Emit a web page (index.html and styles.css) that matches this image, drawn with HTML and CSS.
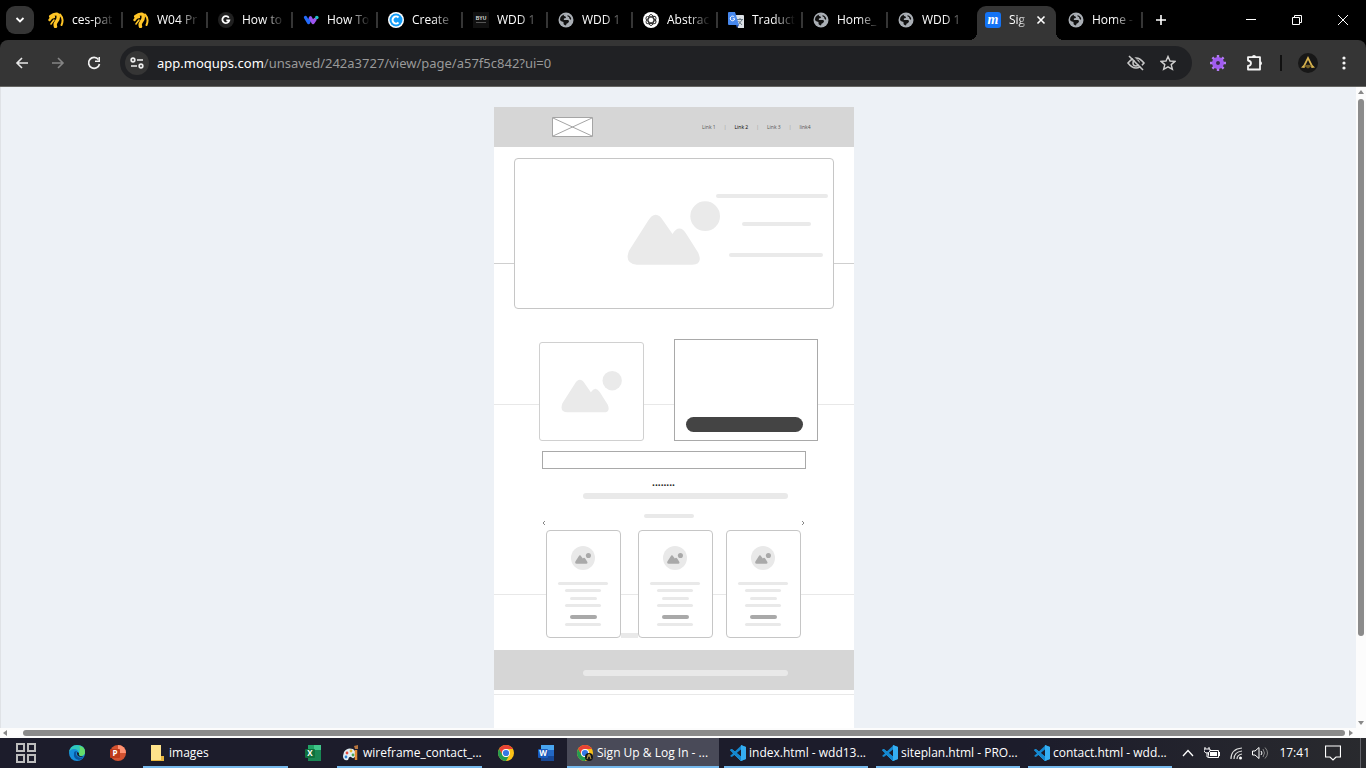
FILE: index.html
```html
<!DOCTYPE html>
<html lang="en">
<head>
<meta charset="utf-8">
<meta name="viewport" content="width=device-width, initial-scale=1">
<title>Sign Up &amp; Log In</title>
<link rel="stylesheet" href="styles.css">
</head>
<body>
<svg class="defs" aria-hidden="true">
  <symbol id="church" viewBox="0 0 16 16"><g fill="none" stroke="#ffc526" stroke-linecap="round"><path d="M2.500 4.500Q6 1.500 9 2" stroke-width="3"/><path d="M1.500 8Q3.500 5 6 5" stroke-width="2.400"/><path d="M10 3Q11 7 8.500 9.500Q6.500 12 7.500 14.500" stroke-width="3.400"/><path d="M12 2.500Q15 6 14.500 9Q14.500 11 13.500 13" stroke-width="2"/><path d="M3 12Q4 10.500 6 8" stroke-width="1.600"/></g></symbol>
  <symbol id="globe" viewBox="0 0 16 16"><circle cx="8" cy="8" r="7.500" fill="#a9aeb4"/><path d="M8 2Q5 2 6 4Q8 4 8 6Q5 6 6 8H10Q12 9 10 11Q8 11 8 13.500Q5 13 5.500 10Q2 9 2 7.500Q2 3 8 2Z" fill="#111"/><path d="M9.500 3Q14 5 13 8Q11 7 11 5Q9 5 9.500 3Z" fill="#111"/></symbol>
  <symbol id="chrome" viewBox="0 0 16 16"><circle cx="8" cy="8" r="8" fill="#fbc116"/><path d="M1.100 4A8 8 0 0 1 14.900 4H8L4.600 10Z" fill="#e94235"/><path d="M1.100 4A8 8 0 0 0 8 16L11.500 10A4 4 0 0 1 4.500 10Z" fill="#229b51"/><circle cx="8" cy="8" r="4" fill="#fff"/><circle cx="8" cy="8" r="3.100" fill="#3478e5"/></symbol>
  <symbol id="code" viewBox="0 0 16 16"><path d="M11 0L16 2V14L11 16L4.500 10L1.800 12L0 11L10.700 1Z" fill="#1387d0"/><path d="M1.800 4L0 5L11 16L16 14V2L11 0V11.500Z" fill="#35aef2"/><path d="M11 4.500V11.500L6.700 8Z" fill="#1c1c2b"/><path d="M1.800 4L11 11.500V16L0 5Z" fill="#1387d0"/></symbol>
  <symbol id="hills" viewBox="0 0 94 65"><path d="M2 50L21 20Q29 7 37 20L46 33Q53 22 60 33L72 52Q77 64 66 64H10Q-3 63 2 50Z"/><circle cx="79" cy="15" r="15"/></symbol>
</svg>

<header class="browser">
  <div class="tabstrip">
    <button class="tab-search" aria-label="Search tabs"><svg viewBox="0 0 12 12"><path d="M2.500 4L6 7.500L9.500 4" fill="none" stroke="#fff" stroke-width="1.800"/></svg></button>
    <nav class="tabs" aria-label="Tabs">
      <a class="tab" href="#"><svg><use href="#church"/></svg><span>ces-pat</span></a>
      <a class="tab" href="#"><svg><use href="#church"/></svg><span>W04 Pr</span></a>
      <a class="tab" href="#"><svg viewBox="0 0 16 16"><circle cx="8" cy="8" r="8" fill="#202020"/><path d="M10.800 5.700A3.500 3.500 0 1 0 11.300 8.300H8.300" fill="none" stroke="#fff" stroke-width="1.800"/></svg><span>How to</span></a>
      <a class="tab" href="#"><svg viewBox="0 0 16 16"><path d="M2.500 5.500L5.500 10.500L7.500 6" fill="none" stroke="#236bfa" stroke-width="3.300" stroke-linecap="round" stroke-linejoin="round"/><path d="M7.500 6L10 10.500L12 7.500" fill="none" stroke="#9e55ef" stroke-width="3.300" stroke-linecap="round" stroke-linejoin="round"/><circle cx="13.800" cy="5.500" r="1.800" fill="#22bfc6"/></svg><span>How To</span></a>
      <a class="tab" href="#"><svg viewBox="0 0 16 16"><circle cx="8" cy="8" r="8" fill="#fff"/><circle cx="8" cy="8" r="6.500" fill="#149df8"/><path d="M10.500 5.500A3.500 3.500 0 1 0 10.500 10.500" fill="none" stroke="#fff" stroke-width="2"/></svg><span>Create</span></a>
      <a class="tab" href="#"><svg viewBox="0 0 16 16"><path d="M0 0H16V16H0Z" fill="#111"/><text x="8" y="8" class="mark-byu">BYU</text><path d="M3 10.500H13" stroke="#555"/></svg><span>WDD 1</span></a>
      <a class="tab" href="#"><svg><use href="#globe"/></svg><span>WDD 1</span></a>
      <a class="tab" href="#"><svg viewBox="0 0 16 16"><circle cx="8" cy="8" r="8" fill="#fff"/><g fill="none" stroke="#222" stroke-width=".9"><ellipse cx="8" cy="8" rx="2.800" ry="5.500"/><ellipse cx="8" cy="8" rx="2.800" ry="5.500" transform="rotate(60 8 8)"/><ellipse cx="8" cy="8" rx="2.800" ry="5.500" transform="rotate(120 8 8)"/></g></svg><span>Abstrac</span></a>
      <a class="tab" href="#"><svg viewBox="0 0 16 16"><path d="M6 3H15Q16 3 16 4V16H10Z" fill="#dce0e5"/><path d="M9 7.500H15M12 6V8M10 13L14 8M10.500 9L14 13" stroke="#687884" fill="none"/><path d="M1 0H7L11 13H1Q0 13 0 12V1Q0 0 1 0Z" fill="#4788ed"/><path d="M8 13H11L9 16Z" fill="#2455b5"/><path d="M6.300 5A2.300 2.300 0 1 0 6.800 6.800H4.800" fill="none" stroke="#fff"/></svg><span>Traduct</span></a>
      <a class="tab" href="#"><svg><use href="#globe"/></svg><span>Home_</span></a>
      <a class="tab before-active" href="#"><svg><use href="#globe"/></svg><span>WDD 1</span></a>
      <div class="tab active"><svg viewBox="0 0 16 16"><rect width="16" height="16" rx="3" fill="#1473f5"/><text x="8" y="12" class="mark-m">m</text></svg><span>Sig</span><button aria-label="Close tab"><svg viewBox="0 0 10 10"><path d="M1.500 1.500L8.500 8.500M8.500 1.500L1.500 8.500" stroke="#fff" stroke-width="1.600"/></svg></button></div>
      <a class="tab" href="#"><svg><use href="#globe"/></svg><span>Home -</span></a>
    </nav>
    <div class="window-controls">
      <button class="new-tab" aria-label="New tab"><svg viewBox="0 0 12 12"><path d="M6 1V11M1 6H11" stroke="#fff" stroke-width="1.600"/></svg></button>
      <button aria-label="Minimize"><svg viewBox="0 0 12 12"><path d="M1 5.500H11" stroke="#fff"/></svg></button>
      <button aria-label="Restore"><svg viewBox="0 0 12 12"><path d="M1.500 3.500H8.500V10.500H1.500ZM3.500 3V1.500H10.500V8.500H9" fill="none" stroke="#fff"/></svg></button>
      <button aria-label="Close"><svg viewBox="0 0 12 12"><path d="M1 1L11 11M11 1L1 11" stroke="#fff"/></svg></button>
    </div>
  </div>
  <div class="toolbar">
    <button aria-label="Back"><svg viewBox="0 0 16 16"><path d="M14 8H3M8 3L3 8L8 13" fill="none" stroke="#e8e8e8" stroke-width="1.600"/></svg></button>
    <button aria-label="Forward"><svg viewBox="0 0 16 16"><path d="M2 8H13M8 3L13 8L8 13" fill="none" stroke="#858585" stroke-width="1.600"/></svg></button>
    <button aria-label="Reload"><svg viewBox="0 0 16 16"><path d="M12.500 4.500A5.500 5.500 0 1 0 13.500 9" fill="none" stroke="#f0f0f0" stroke-width="1.700"/><path d="M14 2V7H9V5.500H12.500V2Z" fill="#f0f0f0"/></svg></button>
    <div class="omnibox">
      <button class="site-info" aria-label="Site information"><svg viewBox="0 0 16 16"><g fill="none" stroke="#eee" stroke-width="1.700"><circle cx="4" cy="5" r="1.800"/><path d="M8 5H14M2 11H8"/><circle cx="12" cy="11" r="1.800"/></g></svg></button>
      <a class="address" href="#">app.moqups.com<span>/unsaved/242a3727/view/page/a57f5c842?ui=0</span></a>
      <button aria-label="Third-party cookies blocked"><svg class="wide-icon" viewBox="0 0 18 16"><path d="M1 8Q9-2 17 8Q9 18 1 8Z" fill="none" stroke="#c7c7c7" stroke-width="1.600"/><circle cx="9" cy="8" r="3" fill="none" stroke="#c7c7c7" stroke-width="1.500"/><path d="M4 0L17 14" stroke="#202124" stroke-width="2"/><path d="M2 1L16 15" stroke="#c7c7c7" stroke-width="1.600"/></svg></button>
      <button aria-label="Bookmark"><svg viewBox="0 0 16 16"><path d="M8 1.500L10 6L15 6.400L11.200 9.600L12.400 14.300L8 11.800L3.600 14.300L4.800 9.600L1 6.400L6 6Z" fill="none" stroke="#d0d0d0" stroke-width="1.400"/></svg></button>
    </div>
    <div class="extensions">
      <button aria-label="Extension"><svg viewBox="0 0 16 16"><path d="M8 0V16M0 8H16M2.400 2.400L13.600 13.600M13.600 2.400L2.400 13.600" stroke="#b47af6" stroke-width="2.400"/><circle cx="8" cy="8" r="4" fill="none" stroke="#a15cf1" stroke-width="4"/><circle cx="8" cy="8" r="2" fill="#38284d"/></svg></button>
      <button aria-label="Extensions"><svg class="wide-icon" viewBox="0 0 18 16"><path d="M3 2.200H15V14.500H3V11Q6 10.500 6 8.300Q6 6 3 5.500Z" fill="none" stroke="#f5f5f5" stroke-width="1.800" stroke-linejoin="round"/><path d="M7 2A2 2 0 0 1 11 2ZM15 6.300A2 2 0 0 1 15 10.300Z" fill="#f5f5f5"/></svg></button>
      <i class="divider"></i>
      <button class="profile" aria-label="Profile"><svg viewBox="0 0 20 20"><circle cx="10" cy="10" r="10" fill="#171717"/><path d="M10 3L14.500 12L17 14.500L13.500 15L12.500 12L10 7L7.500 12L6.500 15L3 14.500L5.500 12Z" fill="#d7b34f"/><path d="M6 13Q10 10.500 14 13L10 15.500Z" fill="#776127"/></svg></button>
      <button class="menu" aria-label="Menu"><svg viewBox="0 0 16 16"><g fill="#f5f5f5"><circle cx="8" cy="3" r="1.600"/><circle cx="8" cy="8" r="1.600"/><circle cx="8" cy="13" r="1.600"/></g></svg></button>
    </div>
  </div>
</header>

<main class="viewport">
  <div class="workspace">
    <article class="page">
      <div class="guides"><i></i><i></i><i></i><i></i></div>
      <header class="page-head">
        <svg class="logo" viewBox="0 0 41 20"><path d="M.5 .5H40.500V19.500H.5Z" fill="#fff" stroke="#a5a5a5"/><path d="M1 1L40 19M40 1L1 19" stroke="#a5a5a5"/></svg>
        <nav class="page-links"><a href="#">Link 1</a><i>|</i><a class="current" href="#">Link 2</a><i>|</i><a href="#">Link 3</a><i>|</i><a href="#">link4</a></nav>
      </header>
      <section class="hero">
        <svg class="hero-picture"><use href="#hills"/></svg>
        <div class="hero-lines"><i></i><i></i><i></i></div>
      </section>
      <section class="feature">
        <div class="feature-picture"><svg><use href="#hills"/></svg></div>
        <div class="feature-box"><button aria-label="Call to action"></button></div>
      </section>
      <input class="field" type="text" aria-label="Text field">
      <p class="dots">........</p>
      <i class="bar"></i>
      <section class="carousel">
        <i class="caption"></i>
        <div class="arrows"><button aria-label="Previous"><svg viewBox="0 0 4 6"><path d="M3 1L1 3L3 5" fill="none" stroke="#888"/></svg></button><button aria-label="Next"><svg viewBox="0 0 4 6"><path d="M1 1L3 3L1 5" fill="none" stroke="#888"/></svg></button></div>
        <div class="cards">
          <div class="card"><span class="avatar"><svg><use href="#hills"/></svg></span><i class="wide"></i><i></i><i class="short"></i><i></i><i class="short dark"></i><i></i></div>
          <b class="stub"></b>
          <div class="card"><span class="avatar"><svg><use href="#hills"/></svg></span><i class="wide"></i><i></i><i class="short"></i><i></i><i class="short dark"></i><i></i></div>
          <div class="card last"><span class="avatar"><svg><use href="#hills"/></svg></span><i class="wide"></i><i></i><i class="short"></i><i></i><i class="short dark"></i><i></i></div>
        </div>
      </section>
      <footer class="page-foot"><i class="bar"></i></footer>
    </article>
  </div>
  <div class="scroll vertical"><svg viewBox="0 0 8 8"><path d="M4 2L7 6H1Z"/></svg><i></i><svg viewBox="0 0 8 8"><path d="M4 6L7 2H1Z"/></svg></div>
  <div class="scroll horizontal"><svg viewBox="0 0 8 8"><path d="M2 4L6 1V7Z"/></svg><i></i><svg viewBox="0 0 8 8"><path d="M6 4L2 1V7Z"/></svg></div>
</main>

<footer class="taskbar">
  <button class="start" aria-label="Start"><svg viewBox="0 0 20 20"><path d="M1 1H8V8H1ZM12 1H19V8H12ZM1 12H8V19H1ZM12 12H19V19H12Z" fill="none" stroke="#bdbdbd" stroke-width="2"/></svg></button>
  <button class="pin" aria-label="Edge"><svg viewBox="0 0 16 16"><circle cx="8" cy="8" r="8" fill="#168fdc"/><path d="M0 8Q1 0 8 0Q16 0 16 7Q16 11 11 11Q8 10 10 8Q9 4 5 4Q1 4 0 8Z" fill="#30c9bc"/><path d="M10 1Q16 2 16 7Q16 11 11 11L10 8Q12 4 10 1Z" fill="#67dd69"/><path d="M5 8Q4 14 10 15Q13 15 15 12Q10 14 8 11Q6 9 8 6Q5 6 5 8Z" fill="#0955a1"/><path d="M8 7Q7 12 13 12L15 11Q9 12 10 8Z" fill="#1c1c2b"/></svg></button>
  <button class="pin powerpoint" aria-label="PowerPoint"><svg viewBox="0 0 16 16"><circle cx="8" cy="8" r="8" fill="#d35230"/><path d="M8 0A8 8 0 0 1 16 8H8Z" fill="#ff9272"/><rect y="4" width="10" height="9" rx="1" fill="#be3a1a"/><text x="5" y="11" class="mark-app">P</text></svg></button>
  <button class="task"><svg viewBox="0 0 16 16"><path d="M2 0H12V13L14 11V16H2Z" fill="#ffe38b"/><path d="M12 11H15V16H2V15H12Z" fill="#e5b53e"/></svg><span>images</span></button>
  <button class="pin excel" aria-label="Excel"><svg viewBox="0 0 16 16"><path d="M3 0H16V16H3Z" fill="#188653"/><path d="M9 0H16V5H9Z" fill="#3fc68a"/><path d="M3 0H9V5H3Z" fill="#22a366"/><rect y="4" width="10" height="9" rx="1" fill="#0f703c"/><text x="5" y="11" class="mark-app">X</text></svg></button>
  <button class="task"><svg viewBox="0 0 16 16"><path d="M1 7Q4 2 10 4Q13 6 13 10Q11 15 8 12Q6 11 5 15Q0 16 0 11Z" fill="#e1edf4"/><circle cx="4" cy="8" r="1.400" fill="#e34b3e"/><circle cx="8" cy="6" r="1.400" fill="#e5b72d"/><circle cx="10" cy="10" r="1.400" fill="#47a757"/><circle cx="3" cy="12" r="1.400" fill="#2c81d2"/><path d="M13 5V15" stroke="#e38b32" stroke-width="2.500"/><path d="M11 1L15 0V4H12Z" fill="#b6753e"/></svg><span>wireframe_contact_...</span></button>
  <button class="pin chrome" aria-label="Chrome"><svg><use href="#chrome"/></svg></button>
  <button class="pin word" aria-label="Word"><svg viewBox="0 0 16 16"><path d="M3 0H16V16H3Z" fill="#2368c4"/><path d="M3 0H16V5H3Z" fill="#49a5f0"/><path d="M3 11H16V16H3Z" fill="#174896"/><rect y="4" width="10" height="9" rx="1" fill="#185abd"/><text x="5" y="11" class="mark-app">W</text></svg></button>
  <button class="task current"><svg viewBox="0 0 16 16"><use href="#chrome" width="16" height="16"/><circle cx="12" cy="12" r="4" fill="#171717"/><path d="M10 14L12 9L14 14M10 11H14" stroke="#bd9940" fill="none"/></svg><span>Sign Up &amp; Log In - ...</span></button>
  <div class="editors">
    <button class="task"><svg><use href="#code"/></svg><span>index.html - wdd13...</span></button>
    <button class="task"><svg><use href="#code"/></svg><span>siteplan.html - PRO...</span></button>
    <button class="task"><svg><use href="#code"/></svg><span>contact.html - wdd...</span></button>
  </div>
  <div class="tray">
    <svg viewBox="0 0 16 16"><path d="M3 11L8 5.500L13 11" fill="none" stroke="#fff" stroke-width="1.300"/></svg>
    <svg viewBox="0 0 16 16"><path d="M4.500 5.500H14.500V12.500H4.500Z" fill="none" stroke="#fff"/><path d="M6 7H13V11H6ZM15 7H16V11H15Z" fill="#fff"/><path d="M1 2V4M5 2V4M0 4H6V6Q5 8 3 8Q1 8 0 6ZM3 8V12H5" fill="#1c1c2b" stroke="#fff"/></svg>
    <svg viewBox="0 0 16 16"><g fill="none" stroke="#ddd" stroke-width="1.200"><path d="M3 14Q3 4 14 3"/><path d="M6 14Q6 7 14 6"/><path d="M9 14Q9 10 14 9"/></g><circle cx="12.500" cy="13" r="1.500" fill="#fff"/></svg>
    <svg viewBox="0 0 16 16"><path d="M.5 6H3L7 2.500V13.500L3 10H.5Z" fill="none" stroke="#fff"/><path d="M9 6Q11 8 9 10" fill="none" stroke="#fff"/><path d="M11 4Q14 8 11 12M13 2.500Q18 8 13 13.500" fill="none" stroke="#888"/></svg>
    <time>17:41</time>
    <svg viewBox="0 0 16 16"><path d="M.5 1H15.500V12H11L8 15L5 12H.5Z" fill="none" stroke="#fff" stroke-width="1.200"/></svg>
  </div>
</footer>
</body>
</html>
```
FILE: styles.css
```css
* { box-sizing: border-box; }
body {
  margin: 0;
  height: 100vh;
  display: flex;
  flex-direction: column;
  overflow: hidden;
  font: 12px/16px "Open Sans", "Noto Sans", sans-serif;
  background: #000;
}
button { border: 0; padding: 0; margin: 0; background: none; font: inherit; color: inherit; }
a { color: inherit; text-decoration: none; }
i { display: block; font-style: normal; }
svg { display: block; flex: none; width: 16px; height: 16px; }
.defs { position: absolute; width: 0; height: 0; }

/* Tabs */
.browser { flex: none; }
.tabstrip { display: flex; height: 40px; color: #fff; }
.tab-search { flex: none; display: grid; place-items: center; width: 28px; height: 28px; margin: 6px 4px 6px 6px; border-radius: 9px; background: #353535; }
.tab-search svg { width: 12px; height: 12px; }
.tabs { flex: 1; display: flex; min-width: 0; }
.tab { flex: 1 1 0; min-width: 0; display: flex; align-items: center; gap: 8px; padding: 0 4px 0 10px; margin: 6px 0 0; height: 28px; position: relative; }
.tab span { flex: 1; white-space: nowrap; mask-image: linear-gradient(90deg, #000 45%, transparent 92%); }
.tab:not(.active)::after { content: ""; position: absolute; right: 0; top: 6px; width: 2px; height: 16px; background: #353535; }
.tab.before-active::after { display: none; }
.tab.active { flex: 0 0 79px; height: 34px; margin: 6px 2px 0 4px; padding: 0 10px 6px 8px; border-radius: 9px 9px 0 0; background: #353535; }
.tab.active span { mask-image: linear-gradient(90deg, #000 50%, transparent 110%); }
.tab.active::before { content: ""; position: absolute; left: -8px; right: -8px; bottom: 0; height: 8px; background: radial-gradient(circle at 0 0, transparent 8px, #353535 8px) left / 8px 8px no-repeat, radial-gradient(circle at 100% 0, transparent 8px, #353535 8px) right / 8px 8px no-repeat; }
.tab button svg { width: 10px; height: 10px; }
.window-controls { flex: none; display: flex; align-items: center; width: 223px; }
.window-controls button { flex: 1; display: grid; place-items: center; height: 40px; }
.window-controls svg { width: 12px; height: 12px; }
.window-controls .new-tab { flex: 0 0 36px; margin-right: 49px; }
.mark-byu { font: bold 5px "Liberation Sans", sans-serif; fill: #ddd; text-anchor: middle; }
.mark-m { font: italic bold 14px "Liberation Serif", serif; fill: #fff; text-anchor: middle; }
.mark-app { font: bold 8px "Open Sans", sans-serif; fill: #fff; text-anchor: middle; }

/* Toolbar */
.toolbar { display: flex; align-items: center; height: 47px; padding: 0 4px; background: #353535; border-bottom: 1px solid #656562; border-radius: 8px 8px 0 0; }
.toolbar button { flex: none; display: grid; place-items: center; width: 36px; height: 34px; }
.omnibox { flex: 1; min-width: 0; display: flex; align-items: center; height: 34px; margin-left: 8px; padding: 0 8px 0 5px; border-radius: 17px; background: #202124; }
.omnibox button { width: 32px; }
.omnibox .site-info { width: 24px; height: 24px; border-radius: 50%; background: #353535; }
.address { flex: 1; min-width: 0; margin-left: 8px; font-family: "Noto Sans", sans-serif; font-size: 13px; line-height: 20px; color: #fff; white-space: nowrap; overflow: hidden; }
.address span { color: #999; }
svg.wide-icon { width: 18px; }
.extensions { display: flex; align-items: center; margin-left: 8px; }
.toolbar .divider { width: 2px; height: 16px; margin: 0 8px; background: #111; }
.profile svg { width: 20px; height: 20px; }

/* Workspace */
.viewport { flex: 1; min-height: 0; display: grid; grid-template: minmax(0, 1fr) 10px / minmax(0, 1fr) 10px; background: #fcfcfc; }
.workspace { display: flex; justify-content: center; padding: 20px 10px 0 0; overflow: hidden; background: #edf1f6; border-left: 1px solid #dfe2e6; }
.scroll { display: flex; align-items: center; gap: 2px; padding: 1px; fill: #888; }
.scroll svg { width: 8px; height: 8px; }
.scroll i { border-radius: 3px; background: #8b8b8b; }
.vertical { flex-direction: column; }
.vertical i { width: 6px; flex: 0 1 84%; margin: 1px 0 auto; }
.horizontal { grid-column: 1 / -1; padding-right: 11px; }
.horizontal i { height: 6px; flex: 1; margin-left: 12px; }

/* Wireframe page */
.page { position: relative; isolation: isolate; width: 360px; height: 700px; background: #fff; }
.guides { position: absolute; z-index: -1; inset: 0; display: grid; grid-template-rows: 157px 141px 190px 100px; }
.guides i { border-bottom: 1px solid #e8e8e8; }
.guides i:first-child { border-color: #cfcfcf; }
.page-head { display: flex; align-items: center; justify-content: space-between; height: 40px; padding: 0 43px 0 58px; background: #d6d6d6; }
.logo { width: 41px; height: 20px; }
.page-links { display: flex; gap: 8px; font-size: 5px; line-height: 8px; color: #555; }
.page-links i { color: #999; }
.page-links .current { color: #000; }
.hero { display: flex; align-items: flex-start; height: 151px; margin: 11px 20px 0; padding: 35px 4px 0 112px; border: 1px solid #c6c6c6; border-radius: 4px; background: #fff; fill: #eaeaea; }
.hero-picture { width: 93px; height: 65px; margin-top: 7px; }
.hero-lines { flex: 1; display: flex; flex-direction: column; align-items: center; margin-left: -4px; }
.hero-lines i { width: 112px; height: 4px; border-radius: 2px; background: #eaeaea; }
.hero-lines i:nth-child(2) { width: 69px; margin: 24px 0 27px 8px; }
.hero-lines i:nth-child(3) { width: 94px; margin-left: 8px; }
.feature { display: flex; justify-content: space-between; align-items: flex-end; margin: 30px 36px 0 45px; }
.feature-picture { width: 105px; height: 99px; padding: 28px 21px; border: 1px solid #d0d0d0; border-radius: 3px; background: #fff; fill: #eaeaea; }
.feature-picture svg { width: 61px; height: 42px; }
.feature-box { display: flex; align-items: flex-end; justify-content: center; width: 144px; height: 102px; padding: 0 3px 8px 0; border: 1px solid #a9a9a9; background: #fff; }
.feature-box button { width: 117px; height: 15px; border-radius: 8px; background: #444; }
.field { display: block; width: 264px; height: 18px; margin: 10px 0 0 48px; padding: 0 4px; border: 1px solid #a9a9a9; background: #fff; }
.dots { margin: 7px 20px 0 0; height: 17px; font-weight: 700; font-size: 10px; line-height: 12px; text-align: center; color: #222; }
.bar { width: 205px; height: 6px; margin-left: 89px; border-radius: 3px; background: #e9e9e9; }
.carousel { padding: 15px 53px 0 52px; }
.caption { width: 50px; height: 4px; margin-left: 98px; border-radius: 2px; background: #e9e9e9; }
.arrows { display: flex; justify-content: space-between; margin: 2px -4px 4px; }
.arrows svg { width: 4px; height: 6px; }
.cards { display: flex; align-items: flex-end; }
.stub { width: 17px; height: 5px; background: #e9e9e9; }
.card { display: flex; flex-direction: column; align-items: center; gap: 4px; width: 75px; height: 108px; padding: 15px 0 0; border: 1px solid #c6c6c6; border-radius: 4px; background: #fff; }
.card.last { margin-left: 13px; }
.card i { width: 36px; height: 3px; border-radius: 2px; background: #e9e9e9; }
.card .wide { width: 50px; margin-top: 8px; }
.card .short { width: 27px; margin-top: 1px; }
.card .dark { height: 4px; margin-top: 4px; background: #a9a9a9; }
.avatar { display: grid; place-items: center; width: 24px; height: 24px; border-radius: 50%; background: #e9e9e9; fill: #a9a9a9; }
.avatar svg { width: 16px; height: 11px; }
.page-foot { height: 40px; margin-top: 12px; padding-top: 20px; background: #d6d6d6; }

/* Taskbar */
.taskbar { flex: none; display: flex; height: 30px; align-items: center; padding-right: 5px; background: linear-gradient(90deg, #1c1c2b 75%, #292a2e); color: #fff; }
.start { width: 52px; margin-right: 4px; padding-left: 16px; }
.start svg { width: 20px; height: 20px; }
.pin { width: 41px; display: grid; place-items: center; }
.powerpoint, .word { margin-right: 5px; }
.excel { width: 49px; }
.chrome { width: 48px; }
.word { width: 32px; }
.task { flex: 0 1 145px; min-width: 0; display: flex; align-items: center; gap: 4px; height: 30px; padding: 2px 2px 0 6px; border-bottom: 2px solid #76b9ed; white-space: nowrap; }
.task.current { flex-basis: 152px; padding: 2px 10px 0; background: #494a58; }
.editors { display: flex; flex: 0 1 448px; min-width: 0; gap: 8px; margin-left: 5px; }
.editors .task { flex: 1 1 0; gap: 3px; }
.tray { display: flex; align-items: center; gap: 8px; margin-left: auto; padding-right: 19px; border-right: 1px solid #62636a; height: 30px; }
.tray time { margin: 0 7px 0 3px; }
```
